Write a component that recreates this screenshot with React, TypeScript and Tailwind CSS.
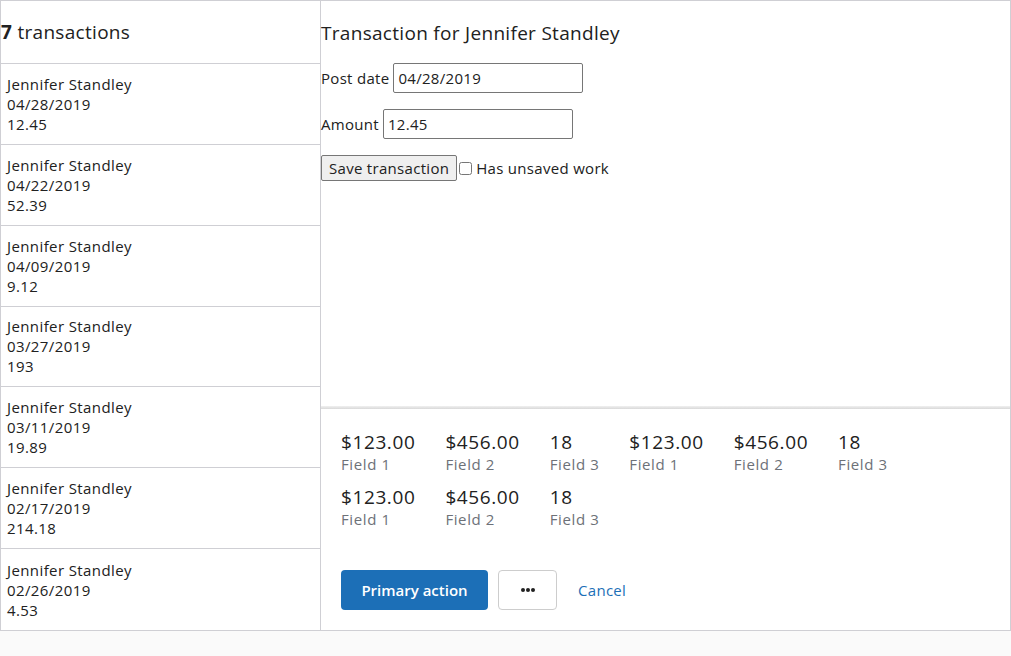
import React from "react";

const items = [
  ["04/28/2019", "12.45"],
  ["04/22/2019", "52.39"],
  ["04/09/2019", "9.12"],
  ["03/27/2019", "193"],
  ["03/11/2019", "19.89"],
  ["02/17/2019", "214.18"],
  ["02/26/2019", "4.53"],
];

const fields = [
  ["$123.00", "Field 1"],
  ["$456.00", "Field 2"],
  ["18", "Field 3"],
  ["$123.00", "Field 1"],
  ["$456.00", "Field 2"],
  ["18", "Field 3"],
  ["$123.00", "Field 1"],
  ["$456.00", "Field 2"],
  ["18", "Field 3"],
];

export default function App() {
  return (
    <div
      className="min-h-[656px] w-[1011px] bg-[#fafafa] text-[#212121] tracking-[0.3px]"
      style={{ fontFamily: '"Open Sans", "Noto Sans", sans-serif' }}
    >
      <div className="flex h-[631px] border border-[#cfcfd4] bg-white">
        <div className="flex w-[320px] shrink-0 flex-col border-r border-[#cfcfd4]">
          <div className="flex h-[63px] items-center border-b border-[#cfcfd4] text-[19px]">
            <span className="font-bold">7</span>
            <span>&nbsp;transactions</span>
          </div>
          {items.map(([d, a], i) => (
            <div
              key={i}
              className={`flex h-[81px] flex-col justify-center px-[6px] text-[15px] leading-[20px] tracking-[0.4px] ${
                i < items.length - 1 ? "border-b border-[#cfcfd4]" : ""
              }`}
            >
              <div>Jennifer Standley</div>
              <div>{d}</div>
              <div>{a}</div>
            </div>
          ))}
        </div>
        <div className="flex flex-1 flex-col">
          <div className="flex-1">
            <div className="pt-[20px] text-[19px] leading-[24px]">Transaction for Jennifer Standley</div>
            <div className="mt-[18px] flex items-center text-[15px]">
              <span>Post date</span>
              <input
                readOnly
                value="04/28/2019"
                className="ml-[4px] h-[30px] w-[190px] rounded-[2px] border border-[#767676] px-[4px] text-[15px] outline-none"
              />
            </div>
            <div className="mt-[16px] flex items-center text-[15px]">
              <span>Amount</span>
              <input
                readOnly
                value="12.45"
                className="ml-[4px] h-[30px] w-[190px] rounded-[2px] border border-[#767676] px-[4px] text-[15px] outline-none"
              />
            </div>
            <div className="mt-[16px] flex items-center text-[15px]">
              <button className="h-[26px] rounded-[2px] border border-[#767676] bg-[#efefef] px-[7px] text-[15px] leading-[20px]">
                Save transaction
              </button>
              <input type="checkbox" className="ml-[2px] mr-[4px] h-[13px] w-[13px]" />
              <span>Has unsaved work</span>
            </div>
          </div>
          <div className="h-[3px] bg-gradient-to-b from-[#f0f0f0] to-[#d9d9d9]" />
          <div className="px-[20px] pb-[20px] pt-[21px]">
            <div className="flex w-[600px] flex-wrap tracking-[0.6px]">
              {fields.map(([v, l], i) => (
                <div key={i} className="mb-[10px] mr-[30px] flex h-[45px] flex-col">
                  <div className="text-[19px] leading-[24px]">{v}</div>
                  <div className="text-[15px] leading-[20px] text-[#6d7178]">{l}</div>
                </div>
              ))}
            </div>
            <div className="mt-[30px] flex items-center">
              <button className="h-[40px] w-[147px] rounded-[4px] bg-[#1c6fb7] text-[15px] font-semibold text-white tracking-normal">
                Primary action
              </button>
              <button className="ml-[10px] flex h-[40px] w-[59px] items-center justify-center rounded-[4px] border border-[#cdcdcd] bg-white">
                <svg width="14" height="4" viewBox="0 0 14 4">
                  <circle cx="2" cy="2" r="2" fill="#212121" />
                  <circle cx="7" cy="2" r="2" fill="#212121" />
                  <circle cx="12" cy="2" r="2" fill="#212121" />
                </svg>
              </button>
              <a className="ml-[21px] text-[15px] text-[#1c6fb7]">Cancel</a>
            </div>
          </div>
        </div>
      </div>
    </div>
  );
}
